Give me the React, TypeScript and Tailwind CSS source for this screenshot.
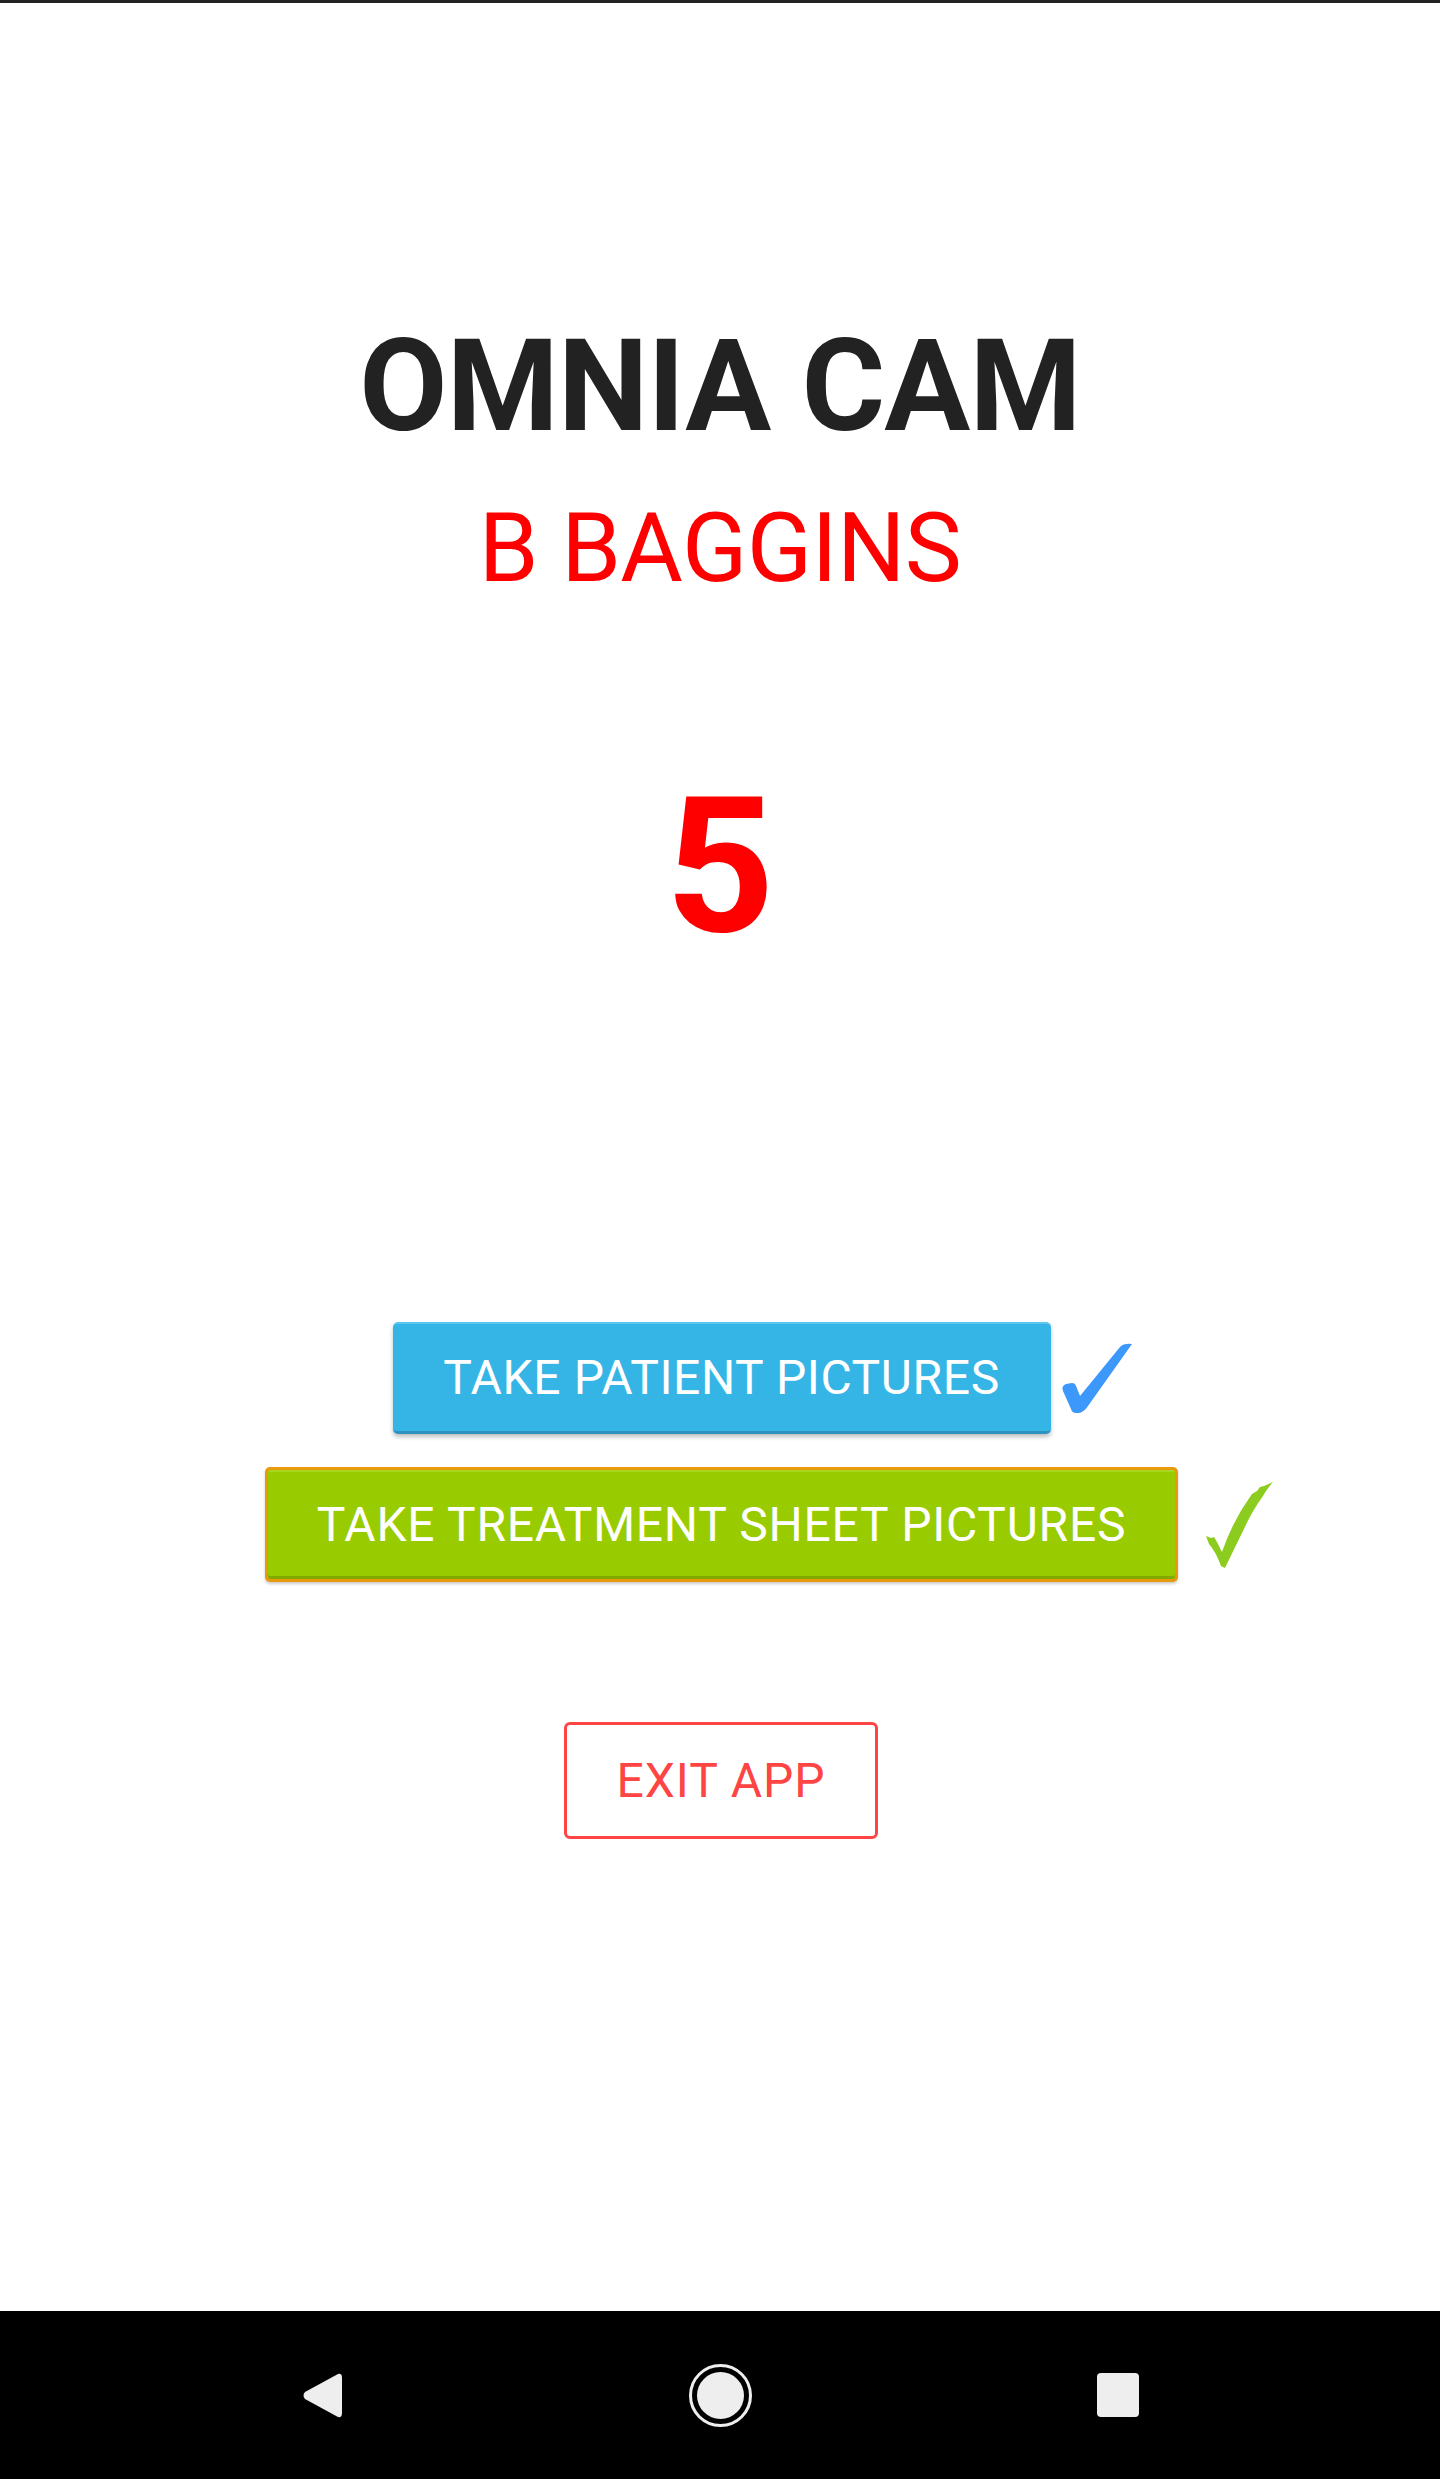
import React from 'react';

function BlueCheck() {
  return (
    <svg width="72" height="71" viewBox="0 0 72 71" className="absolute left-[calc(100%+10px)] top-[21px]">
      <path
        d="M2,48 Q0,43 5,41 L11,40 Q14,40 15,43 L19,53 L59,4 Q63,0 71,1 L27,63 Q22,71 15,70 Q11,70 10,66 Z"
        fill="#3d98fb"
      />
    </svg>
  );
}

function GreenCheck() {
  return (
    <svg width="68" height="87" viewBox="0 0 68 87" className="absolute left-[calc(100%+28px)] top-[15px]">
      <path
        d="M0,54 L5,56 L8,55 L11,60 L16,70 Q27,38 46,12 L51,9 L54,5 L58,4 L67,0 Q60,8 57,14 Q46,29 38,47 Q28,67 19,86 L15,84 Q10,70 3,62 Z"
        fill="#8ccc1f"
      />
    </svg>
  );
}

export default function App() {
  return (
    <div className="flex min-h-[2479px] flex-col bg-white font-['Roboto',sans-serif]">
      <div className="h-[3px] bg-[#222222]" />

      <main className="flex flex-1 flex-col items-center">
        <h1 className="mt-[319px] text-[128px] font-bold leading-none tracking-[-0.8px] text-[#222222]">OMNIA CAM</h1>
        <h2 className="mt-[50px] text-[96px] font-normal leading-none tracking-[-0.6px] text-[#ff0000]">B BAGGINS</h2>
        <div className="mt-[175px] text-[190px] font-bold leading-none text-[#ff0000]">5</div>

        <div className="relative mt-[361px] ml-[3px]">
          <button
            type="button"
            className="flex h-[112px] w-[658px] items-center justify-center rounded-[5px] border-t-2 border-b-[3px] border-t-[#5cc6ee] border-b-[#2d92c0] bg-[#35b5e5] text-[48px] tracking-[0.6px] text-white shadow-[0_3px_4px_rgba(0,0,0,0.25)]"
          >
            TAKE PATIENT PICTURES
          </button>
          <BlueCheck />
        </div>

        <div className="relative mt-[33px] ml-[3px]">
          <button
            type="button"
            className="flex h-[115px] w-[913px] items-center justify-center rounded-[5px] border-[3px] border-[#e89a0a] bg-[#99cc00] text-[48px] tracking-[0.75px] text-white shadow-[inset_0_2px_0_#a8d61a,inset_0_-3px_0_#80aa00,0_2px_3px_rgba(0,0,0,0.2)]"
          >
            TAKE TREATMENT SHEET PICTURES
          </button>
          <GreenCheck />
        </div>

        <button
          type="button"
          className="mt-[140px] ml-[2px] flex h-[117px] w-[314px] items-center justify-center rounded-[6px] border-[3px] border-[#ff4444] bg-white text-[48px] tracking-[1px] text-[#ff4444]"
        >
          EXIT APP
        </button>
      </main>

      <nav className="flex h-[168px] items-center justify-center gap-[278px] bg-black">
        <div className="flex w-[120px] justify-center">
          <svg width="40" height="45" viewBox="0 0 40 45">
            <path d="M36,1 Q40,0 40,5 L40,40 Q40,45 36,44 L3,26 Q0,22.5 3,19 Z" fill="#eeeeee" />
          </svg>
        </div>
        <div className="flex w-[120px] justify-center">
          <div className="flex h-[63px] w-[63px] items-center justify-center rounded-full border-[3px] border-[#eeeeee]">
            <div className="h-[47px] w-[47px] rounded-full bg-[#eeeeee]" />
          </div>
        </div>
        <div className="flex w-[120px] justify-center">
          <div className="h-[44px] w-[42px] rounded-[4px] bg-[#eeeeee]" />
        </div>
      </nav>
    </div>
  );
}
